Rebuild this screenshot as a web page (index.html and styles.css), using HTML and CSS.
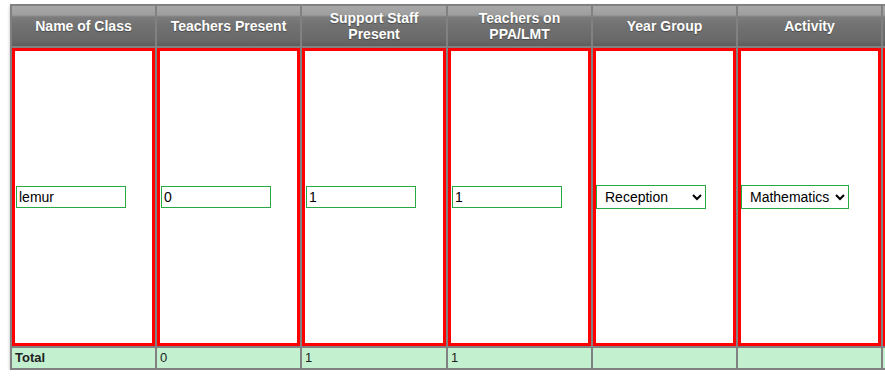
FILE: index.html
```html
<!DOCTYPE html>
<html>
<head>
<meta charset="utf-8">
<link rel="stylesheet" href="styles.css">
</head>
<body>
<div class="page">
  <table class="grid">
    <colgroup>
      <col class="c"><col class="c"><col class="c-wide"><col class="c"><col class="c"><col class="c"><col class="c">
    </colgroup>
    <thead>
      <tr>
        <th>Name of Class</th>
        <th>Teachers Present</th>
        <th>Support Staff Present</th>
        <th>Teachers on PPA/LMT</th>
        <th>Year Group</th>
        <th>Activity</th>
        <th></th>
      </tr>
    </thead>
    <tbody>
      <tr class="entry">
        <td><input class="field" type="text" value="lemur"></td>
        <td><input class="field" type="text" value="0"></td>
        <td><input class="field" type="text" value="1"></td>
        <td><input class="field" type="text" value="1"></td>
        <td class="sel"><select class="pick pick-wide"><option>Reception</option></select></td>
        <td class="sel"><select class="pick"><option>Mathematics</option></select></td>
        <td></td>
      </tr>
      <tr class="total">
        <td class="label">Total</td>
        <td>0</td>
        <td>1</td>
        <td>1</td>
        <td></td>
        <td></td>
        <td class="edge">1</td>
      </tr>
    </tbody>
  </table>
</div>
</body>
</html>
```

FILE: styles.css
```css
html, body {
  margin: 0;
  padding: 0;
  background: #ffffff;
  overflow: hidden;
}

.page {
  padding: 4px 0 0 10px;
  width: 1100px;
}

.grid {
  table-layout: fixed;
  border-collapse: separate;
  border-spacing: 2px;
  background: #818181;
  width: 1018px;
  box-shadow: 0 2px 3px rgba(0, 0, 0, 0.28);
  font-family: "Liberation Sans", Arial, sans-serif;
}

.grid col.c {
  width: 143px;
}

.grid col.c-wide {
  width: 144px;
}

.grid th {
  height: 40px;
  padding: 0 4px;
  box-sizing: border-box;
  color: #ffffff;
  font-size: 14px;
  font-weight: bold;
  line-height: 16px;
  text-align: center;
  vertical-align: middle;
  text-shadow: 0 1px 1px rgba(0, 0, 0, 0.35);
  background: linear-gradient(to bottom,
    #a8a8a8 0px, #9e9e9e 9px, #7c7c7c 11px, #717171 20px, #696969 34px, #5e5e5e 40px);
}

.entry td {
  height: 298px;
  box-sizing: border-box;
  border: 3px solid #ff0000;
  background: #ffffff;
  padding: 0 1px;
  vertical-align: middle;
}

.entry td.sel {
  padding: 0;
}

.field {
  display: block;
  box-sizing: border-box;
  width: 110px;
  height: 22px;
  margin: 0;
  padding: 1px 2px;
  border: 1px solid #27a844;
  border-radius: 0;
  font-family: "Liberation Sans", Arial, sans-serif;
  font-size: 14px;
  color: #000000;
  background: #ffffff;
  outline: none;
}

.pick {
  display: block;
  box-sizing: border-box;
  height: 24px;
  margin: 0;
  padding: 0 2px 0 4px;
  border: 1px solid #27a844;
  border-radius: 0;
  font-family: "Liberation Sans", Arial, sans-serif;
  font-size: 14px;
  color: #000000;
  background-color: #ffffff;
}

.pick-wide {
  width: 110px;
}

.total td {
  height: 20px;
  box-sizing: border-box;
  padding: 0 3px;
  background: #c3f1d0;
  color: #222222;
  font-size: 13px;
  line-height: 20px;
  vertical-align: middle;
  white-space: nowrap;
}

.total td.label {
  font-weight: bold;
}

.total td.edge {
  padding-left: 2px;
  color: #b08a2a;
}
```
